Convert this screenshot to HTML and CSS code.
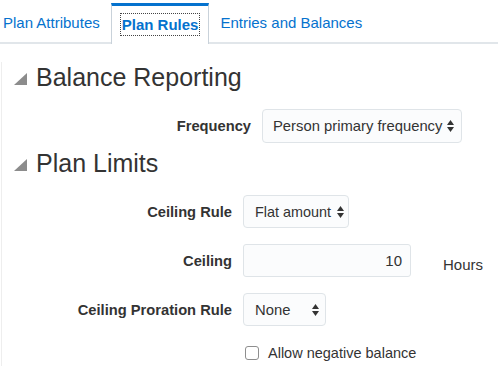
FILE: index.html
```html
<!DOCTYPE html>
<html lang="en">
<head>
    <meta charset="UTF-8">
    <meta name="viewport" content="width=device-width, initial-scale=1.0">
    <title>Plan Rules</title>
    <link rel="stylesheet" href="styles.css">
</head>
<body>
    <div class="tabs">
        <div class="tab first">Plan Attributes</div>
        <div class="tab active"><span class="focus">Plan Rules</span></div>
        <div class="tab">Entries and Balances</div>
    </div>

    <div class="content">
        <h2 class="section-title">
            <svg class="disclosure" width="13" height="12" viewBox="0 0 13 12"><polygon points="0,12 13,12 13,0" fill="#8c8c8c"/></svg>
            Balance Reporting
        </h2>
        <div class="form form-freq">
            <label class="field-label">Frequency</label>
            <div class="select select-freq">
                <span>Person primary frequency</span>
                <svg class="arrows" width="7" height="12" viewBox="0 0 7 12"><polygon points="0,5 3.5,0 7,5" fill="#333"/><polygon points="0,7 3.5,12 7,7" fill="#333"/></svg>
            </div>
        </div>

        <h2 class="section-title section-limits">
            <svg class="disclosure" width="13" height="12" viewBox="0 0 13 12"><polygon points="0,12 13,12 13,0" fill="#8c8c8c"/></svg>
            Plan Limits
        </h2>
        <div class="form form-limits">
            <label class="field-label">Ceiling Rule</label>
            <div class="select select-rule">
                <span>Flat amount</span>
                <svg class="arrows" width="7" height="12" viewBox="0 0 7 12"><polygon points="0,5 3.5,0 7,5" fill="#333"/><polygon points="0,7 3.5,12 7,7" fill="#333"/></svg>
            </div>

            <label class="field-label">Ceiling</label>
            <div class="field-with-unit">
                <div class="input">10</div>
                <span class="unit">Hours</span>
            </div>

            <label class="field-label">Ceiling Proration Rule</label>
            <div class="select select-none">
                <span>None</span>
                <svg class="arrows" width="7" height="12" viewBox="0 0 7 12"><polygon points="0,5 3.5,0 7,5" fill="#333"/><polygon points="0,7 3.5,12 7,7" fill="#333"/></svg>
            </div>

            <span></span>
            <div class="check-row">
                <span class="checkbox"></span>
                <span>Allow negative balance</span>
            </div>
        </div>
    </div>
</body>
</html>
```

FILE: styles.css
```css
body {
    font-family: 'Liberation Sans', Arial, sans-serif;
    color: #333;
    background: #fff;
    margin: 0;
    padding: 0;
    overflow: hidden;
}

.tabs {
    display: flex;
    margin-top: 3px;
    height: 39px;
    border-bottom: 2px solid #e1e6ea;
}

.tab {
    display: flex;
    align-items: center;
    padding: 0 10px 2px 10px;
    border: 1px solid transparent;
    border-bottom: none;
    font-size: 15px;
    color: #0572ce;
    white-space: nowrap;
}

.tab.first {
    padding-left: 2px;
    padding-right: 10px;
}

.tab.active {
    font-weight: bold;
    border-color: #c9d2da;
    border-top: 3px solid #0572ce;
    background: #fff;
    box-sizing: border-box;
    margin-bottom: -2px;
    height: 41px;
    padding: 0 9px 1px 9px;
}

.focus {
    outline: 1px dotted #444;
    padding: 2px 1px;
}

.content {
    margin-left: 1px;
    border-left: 1px solid #eeeeee;
    height: 320px;
}

.section-title {
    display: flex;
    align-items: center;
    margin: 18px 0 0 0;
    padding-left: 12px;
    font-size: 25px;
    font-weight: normal;
    line-height: 30px;
    color: #333;
}

.disclosure {
    margin-right: 9px;
    margin-top: 3px;
}

.section-limits {
    margin-top: 5px;
}

.form {
    display: grid;
    column-gap: 11px;
    row-gap: 16px;
    align-items: center;
    margin-top: 17px;
}

.form-freq {
    grid-template-columns: 249px auto;
}

.form-limits {
    grid-template-columns: 230px auto;
}

.field-label {
    font-size: 14.7px;
    font-weight: bold;
    text-align: right;
    color: #333;
}

.select {
    display: flex;
    align-items: center;
    justify-content: space-between;
    box-sizing: border-box;
    height: 33px;
    padding: 0 6px 0 11px;
    border: 1px solid #dfe4e8;
    border-radius: 4px;
    background: #fbfcfd;
    font-size: 14.8px;
    color: #333;
    white-space: nowrap;
}

.select .arrows {
    flex-shrink: 0;
}

.select-freq {
    width: 200px;
    height: 34px;
    padding-left: 10px;
    padding-right: 7px;
}

.select-rule {
    width: 106px;
    padding-left: 11px;
    padding-right: 4px;
    font-size: 14.4px;
}

.select-none {
    width: 83px;
}

.field-with-unit {
    display: flex;
    align-items: center;
}

.input {
    box-sizing: border-box;
    width: 168px;
    height: 33px;
    padding-right: 8px;
    line-height: 31px;
    text-align: right;
    border: 1px solid #dfe4e8;
    border-radius: 3px;
    background: #fbfcfd;
    font-size: 15px;
}

.unit {
    margin-left: 32px;
    margin-top: 8px;
    font-size: 15px;
}

.check-row {
    display: flex;
    align-items: center;
    height: 20px;
    margin-top: 1px;
    font-size: 14.5px;
}

.checkbox {
    width: 12px;
    height: 12px;
    margin-left: 2px;
    margin-right: 9px;
    border: 1px solid #8e8e8e;
    border-radius: 3px;
    background: #fff;
}
```
